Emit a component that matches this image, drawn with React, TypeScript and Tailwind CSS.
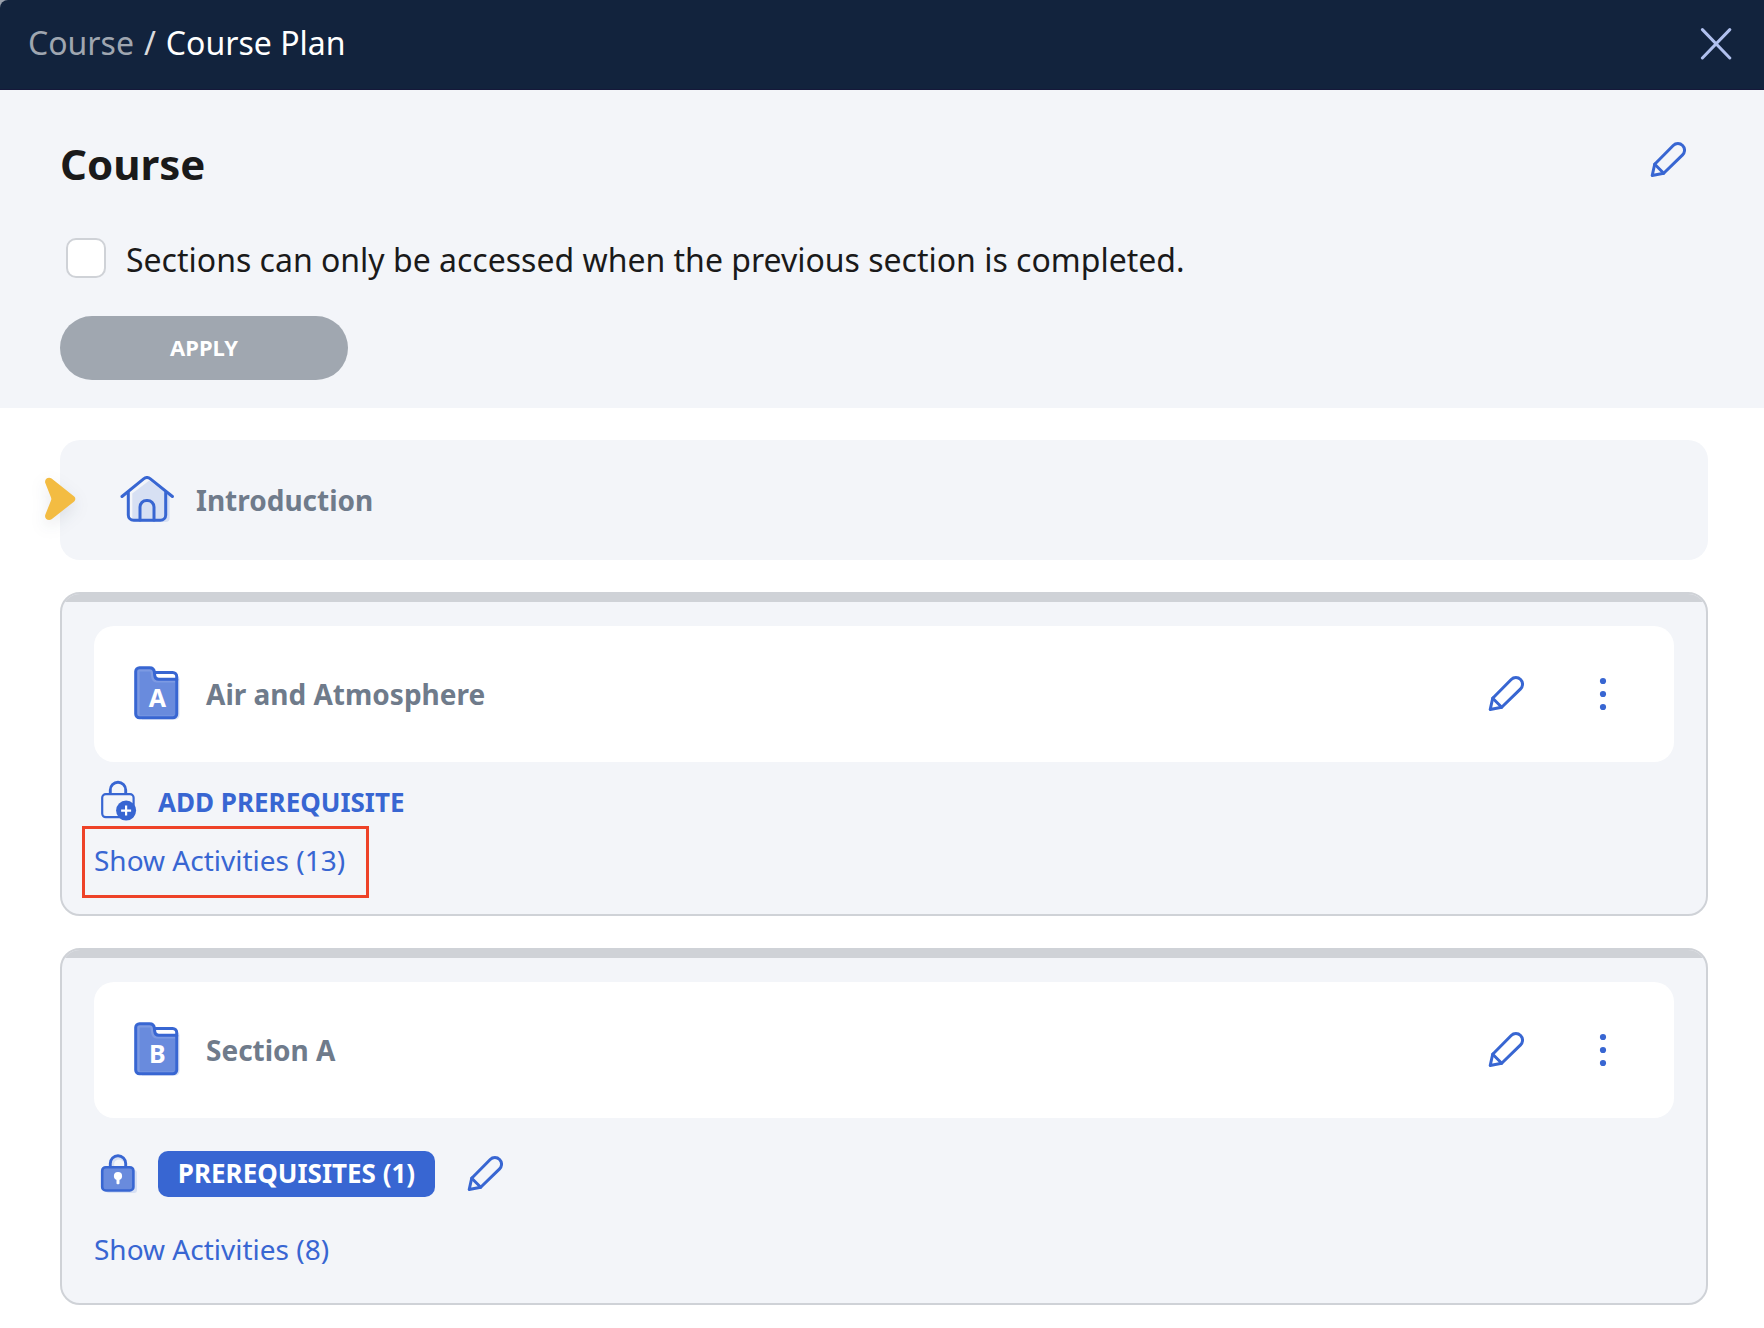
import type { ReactNode } from "react";

const BLUE = "#3866d2";
const TINT = "#d7e0f3";
const FILL = "#698bdd";

function CloseIcon() {
  return (
    <svg className="h-8 w-8" viewBox="0 0 32 32" fill="none" stroke="#b0c0ee" strokeWidth="3" strokeLinecap="round" aria-hidden="true">
      <path d="M2.4 1.6 29.8 30M29.8 1.6 2.400 30" />
    </svg>
  );
}

function PencilIcon() {
  return (
    <svg className="h-9 w-9" viewBox="0 0 36 36" fill="none" stroke={BLUE} strokeWidth="3" strokeLinejoin="round" strokeLinecap="round" aria-hidden="true">
      <path d="M4.700 22.200 23.200 3.500a6.600 6.600 0 0 1 9.400 9.400L13.700 31.300 2.200 33.500Z" />
      <path d="m4.700 22.200 9 9.100" />
    </svg>
  );
}

function DotsIcon() {
  return (
    <svg className="h-9 w-9" viewBox="0 0 36 36" fill={BLUE} aria-hidden="true">
      <circle cx="18" cy="5" r="3.1" />
      <circle cx="18" cy="18" r="3.1" />
      <circle cx="18" cy="31" r="3.1" />
    </svg>
  );
}

function HouseIcon() {
  return (
    <svg className="h-12 w-14 shrink-0" viewBox="0 0 56 48" fill="none" aria-hidden="true">
      <path d="M12.300 17.600 29.300 4.600 49.600 20v22a4 4 0 0 1-4 4H16a4 4 0 0 1-3.700-4Z" fill={TINT} />
      <g stroke={BLUE} strokeWidth="3" strokeLinecap="round" strokeLinejoin="round">
        <path d="M2 20.500 23.600 2.900a5.400 5.400 0 0 1 6.800 0L52.400 20.500" />
        <path d="M8.300 16.500V39a5.300 5.300 0 0 0 5.300 5.300h26.800a5.300 5.300 0 0 0 5.300-5.300V16.500" />
        <path d="M20 44V31a6.600 6.600 0 0 1 6.600-6.600h.8A6.600 6.600 0 0 1 34 31v13" />
      </g>
    </svg>
  );
}

function MarkerIcon() {
  return (
    <svg className="h-11 w-8 overflow-visible drop-shadow-[0_6px_8px_rgba(18,35,61,0.1)]" viewBox="0 0 32 44" fill="#f3bc42" aria-hidden="true">
      <path d="M7.600 1.600 30.200 19.600a3.100 3.100 0 0 1 0 4.800L7.600 42.200c-3.200 2.300-7.600-.6-6.300-4.400L7 23.400a4 4 0 0 0 0-3L1.300 6C0 2.200 4.400-.7 7.600 1.600Z" />
    </svg>
  );
}

function FolderIcon({ letter }: { letter: string }) {
  return (
    <svg className="h-14 w-12 shrink-0" viewBox="0 1 48 56" aria-hidden="true">
      <path d="M8 11h34a3.500 3.500 0 0 1 3.500 3.500V50a4.500 4.500 0 0 1-4.500 4.500H8Z" fill={TINT} />
      <path d="M18 7.400h20.700a4 4 0 0 1 4 4V20H18Z" fill="#fff" />
      <path d="M1.700 6.500a3.800 3.800 0 0 1 3.800-3.800H15.600c2.700 0 4.500 1.500 4.800 4.300l.3 3.300c.3 2.600 1.400 4 4 4h18V48.900a3.800 3.800 0 0 1-3.800 3.800H5.500a3.800 3.800 0 0 1-3.800-3.800Z" fill="#7d9ae2" />
      <path d="M5.600 6.500h10.800l.8 5.500c.6 4 2.800 5.600 6.500 5.600h17.500v33H5.600Z" fill={FILL} />
      <g fill="none" stroke={BLUE} strokeWidth="3" strokeLinejoin="round">
        <path d="M1.700 6.500a3.800 3.800 0 0 1 3.800-3.800H15.600c2.700 0 4.500 1.500 4.800 4.300l.3 3.300c.3 2.600 1.400 4 4 4h18V48.900a3.800 3.800 0 0 1-3.800 3.800H5.500a3.800 3.800 0 0 1-3.800-3.800Z" />
        <path d="M20 7.400h18.700a4 4 0 0 1 4 4v4" />
      </g>
      <text x="23.400" y="42" textAnchor="middle" fill="#fff" className="text-[25px] font-bold">
        {letter}
      </text>
    </svg>
  );
}

function AddLockIcon() {
  return (
    <svg className="h-11 w-10 shrink-0" viewBox="0 0 40 44" fill="none" aria-hidden="true">
      <path d="M10.300 14V10a7.700 7.700 0 0 1 15.400 0v4" stroke={BLUE} strokeWidth="2.900" />
      <rect x="2.200" y="14.200" width="31.400" height="23" rx="3.600" stroke={BLUE} strokeWidth="2.200" />
      <circle cx="26.100" cy="30.600" r="10" fill={BLUE} />
      <path d="M26.100 25.600v10M21.100 30.600h10" stroke="#fff" strokeWidth="2.200" />
    </svg>
  );
}

function LockIcon() {
  return (
    <svg className="h-11 w-10 shrink-0" viewBox="0 0 40 44" fill="none" aria-hidden="true">
      <path d="M13 16v-3.500a6 6 0 0 1 11-3.500" stroke={TINT} strokeWidth="2.400" />
      <path d="M6 18h28a3 3 0 0 1 3 3v17a3 3 0 0 1-3 3H9a3 3 0 0 1-3-3Z" fill={TINT} />
      <path d="M10.300 15.500V11.400a7.700 7.700 0 0 1 15.400 0v4.100" stroke={BLUE} strokeWidth="2.900" />
      <rect x="2.200" y="15.200" width="31.200" height="23.300" rx="3.600" fill={FILL} stroke={BLUE} strokeWidth="2.600" />
      <circle cx="18" cy="24" r="4.100" fill="#fff" />
      <path d="M16.500 26h3v5.200a1 1 0 0 1-1 1h-1a1 1 0 0 1-1-1Z" fill="#fff" />
    </svg>
  );
}

function IconButton({ label, children }: { label: string; children: ReactNode }) {
  return (
    <button type="button" aria-label={label} className="block shrink-0 cursor-pointer">
      {children}
    </button>
  );
}

function SectionCard({ letter, title, children }: { letter: string; title: string; children: ReactNode }) {
  return (
    <section className="overflow-hidden rounded-[20px] border-2 border-[#cfd2d7] bg-[#f3f5f9]">
      <div className="h-2 bg-[#cfd2d7]" />
      <div className="px-8 pt-6 pb-[34px]">
        <div className="flex h-[136px] items-center gap-6 rounded-[20px] bg-white pr-[53px] pl-10">
          <FolderIcon letter={letter} />
          <h2 className="flex-1 text-[28px] leading-10 font-bold text-[#6f7b8b]">{title}</h2>
          <div className="flex items-center gap-[61px]">
            <IconButton label={`Edit ${title}`}>
              <PencilIcon />
            </IconButton>
            <IconButton label={`More options for ${title}`}>
              <DotsIcon />
            </IconButton>
          </div>
        </div>
        {children}
      </div>
    </section>
  );
}

export default function App() {
  return (
    <div className="min-h-screen bg-white font-['Noto_Sans',sans-serif] text-[#1a1a1a]">
      <div className="bg-[#9aa1ac]">
        <header className="flex h-[90px] items-center justify-between rounded-tl-[8px] border-b border-[#15183a] bg-[#12233d] pr-8 pb-px pl-7">
          <nav aria-label="Breadcrumb" className="flex gap-2.5 pb-0.5 text-[32px] leading-10 text-white">
            <a href="#course" className="text-[#9fa6b0]">Course</a>
            <span className="text-[#d9dadd]">/</span>
            <span>Course Plan</span>
          </nav>
          <IconButton label="Close">
            <CloseIcon />
          </IconButton>
        </header>
      </div>

      <div className="bg-[#f3f5f9] pt-[52px] pr-[78px] pb-7 pl-[60px]">
        <div className="flex items-start justify-between">
          <h1 className="text-[42px] leading-[44px] font-bold">Course</h1>
          <IconButton label="Edit course">
            <PencilIcon />
          </IconButton>
        </div>
        <label className="mt-[52px] flex items-start gap-5 pl-1.5 text-[32px] leading-[44px]">
          <input
            type="checkbox"
            className="h-10 w-10 shrink-0 appearance-none rounded-[10px] border-2 border-[#cfd2d7] bg-white checked:bg-[#3866d2]"
          />
          Sections can only be accessed when the previous section is completed.
        </label>
        <button type="button" className="mt-[34px] h-16 w-72 rounded-full bg-[#a0a7b0] pb-0.5 text-[22px] font-bold text-white">
          APPLY
        </button>
      </div>

      <main className="flex flex-col gap-8 pt-8 pr-14 pb-6 pl-[60px]">
        <section className="relative flex h-[120px] items-center gap-5 rounded-[20px] bg-[#f3f5f9] pl-[60px]">
          <span className="absolute top-[37px] -left-4">
            <MarkerIcon />
          </span>
          <HouseIcon />
          <h2 className="text-[28px] leading-10 font-bold text-[#6f7b8b]">Introduction</h2>
        </section>

        <SectionCard letter="A" title="Air and Atmosphere">
          <button type="button" className="mt-5 flex h-10 items-center gap-[18px] pl-1.5 text-[26px] font-bold text-[#3866d2]">
            <AddLockIcon />
            ADD PREREQUISITE
          </button>
          <a href="#activities-a" className="relative mt-[18px] block w-fit text-[28px] leading-10 text-[#3866d2]">
            Show Activities (13)
            <span className="absolute -top-3.5 -right-6 -bottom-[18px] -left-3 border-[3px] border-[#ee4228]" />
          </a>
        </SectionCard>

        <SectionCard letter="B" title="Section A">
          <div className="mt-[33px] flex h-[46px] items-center pl-1.5">
            <LockIcon />
            <button type="button" className="mr-8 ml-[18px] h-[46px] min-w-[277px] rounded-[10px] bg-[#3866d2] px-4 pb-0.5 text-[26px] font-bold text-white">
              PREREQUISITES (1)
            </button>
            <IconButton label="Edit prerequisites">
              <PencilIcon />
            </IconButton>
          </div>
          <a href="#activities-b" className="mt-8 block w-fit text-[28px] leading-10 text-[#3866d2]">
            Show Activities (8)
          </a>
        </SectionCard>
      </main>
    </div>
  );
}
